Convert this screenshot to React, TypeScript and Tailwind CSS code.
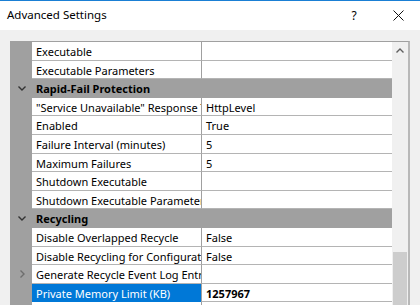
import { ReactNode } from "react";

type Row =
  | { kind: "cat"; label: string }
  | { kind: "prop"; name: string; value?: string; selected?: boolean; expand?: boolean };

const rows: Row[] = [
  { kind: "prop", name: "Executable" },
  { kind: "prop", name: "Executable Parameters" },
  { kind: "cat", label: "Rapid-Fail Protection" },
  { kind: "prop", name: "\"Service Unavailable\" Response Type", value: "HttpLevel" },
  { kind: "prop", name: "Enabled", value: "True" },
  { kind: "prop", name: "Failure Interval (minutes)", value: "5" },
  { kind: "prop", name: "Maximum Failures", value: "5" },
  { kind: "prop", name: "Shutdown Executable" },
  { kind: "prop", name: "Shutdown Executable Parameters" },
  { kind: "cat", label: "Recycling" },
  { kind: "prop", name: "Disable Overlapped Recycle", value: "False" },
  { kind: "prop", name: "Disable Recycling for Configuration Changes", value: "False" },
  { kind: "prop", name: "Generate Recycle Event Log Entry", expand: true },
  { kind: "prop", name: "Private Memory Limit (KB)", value: "1257967", selected: true },
  { kind: "prop", name: "Regular Time Interval (minutes)", value: "1740" },
];

function Chevron({ dir, className }: { dir: "down" | "right" | "up"; className?: string }) {
  const d =
    dir === "down" ? "M1.5 3.5 L5 7 L8.5 3.5" : dir === "right" ? "M3.5 1.5 L7 5 L3.5 8.5" : "M1.5 6.5 L5 3 L8.5 6.5";
  return (
    <svg width="10" height="10" viewBox="0 0 10 10" className={className}>
      <path d={d} fill="none" stroke="currentColor" strokeWidth="1.4" />
    </svg>
  );
}

function Gutter({ children }: { children?: ReactNode }) {
  return <div className="w-[21px] shrink-0 bg-[#a0a0a0] flex items-center justify-center">{children}</div>;
}

export default function App() {
  return (
    <div
      className="w-[420px] h-[305px] overflow-hidden bg-[#f0f0f0] text-[11px] text-black"
      style={{ fontFamily: '"Noto Sans", "Open Sans", sans-serif' }}
    >
      <div className="h-[30px] bg-white border-t border-[#1a7fd4] flex items-center pl-[7px] text-[11.5px]">
        <span className="flex-1 pb-[1px]">Advanced Settings</span>
        <span className="w-[14px] text-center mr-[32px] text-[12px]">?</span>
        <svg width="11" height="11" viewBox="0 0 11 11" className="mr-[16px]">
          <path d="M0.5 0.5 L10.5 10.5 M10.5 0.5 L0.5 10.5" stroke="#111" strokeWidth="1" />
        </svg>
      </div>

      <div className="pl-[10px] pt-[11px]">
        <div className="w-[400px] border-t border-l border-[#a0a0a0] border-r-2 border-r-[#b8b8b8] flex">
          <div className="w-[381px] bg-white">
            {rows.map((r, i) =>
              r.kind === "cat" ? (
                <div key={i} className="h-[18.6px] flex bg-[#a0a0a0] border-b border-[#a0a0a0]">
                  <Gutter>
                    <Chevron dir="down" className="text-[#333]" />
                  </Gutter>
                  <div className="pl-[4px] font-bold leading-[19px]">{r.label}</div>
                </div>
              ) : (
                <div key={i} className="h-[18.6px] flex">
                  <Gutter>{r.expand && <Chevron dir="right" className="text-[#6e6e6e]" />}</Gutter>
                  <div
                    className={
                      r.selected
                        ? "w-[169px] shrink-0 pl-[4px] leading-[19px] whitespace-nowrap overflow-hidden bg-[#0078d7] text-white border-b border-[#0078d7]"
                        : "w-[169px] shrink-0 pl-[4px] leading-[19px] whitespace-nowrap overflow-hidden border-b border-[#b4b4b4]"
                    }
                  >
                    {r.name}
                  </div>
                  <div
                    className={
                      r.selected
                        ? "flex-1 pl-[4px] leading-[19px] overflow-hidden border-l border-[#a0a0a0] border-b border-b-[#b4b4b4] font-bold"
                        : "flex-1 pl-[4px] leading-[19px] overflow-hidden border-l border-[#a0a0a0] border-b border-b-[#b4b4b4]"
                    }
                  >
                    {r.value}
                  </div>
                </div>
              )
            )}
          </div>
          <div className="w-[16px] bg-[#f0f0f0] flex flex-col">
            <div className="h-[17px] flex items-center justify-center text-[#606060]">
              <Chevron dir="up" />
            </div>
            <div className="h-[193px]" />
            <div className="mx-[1px] flex-1 bg-[#cdcdcd]" />
          </div>
        </div>
      </div>
    </div>
  );
}
